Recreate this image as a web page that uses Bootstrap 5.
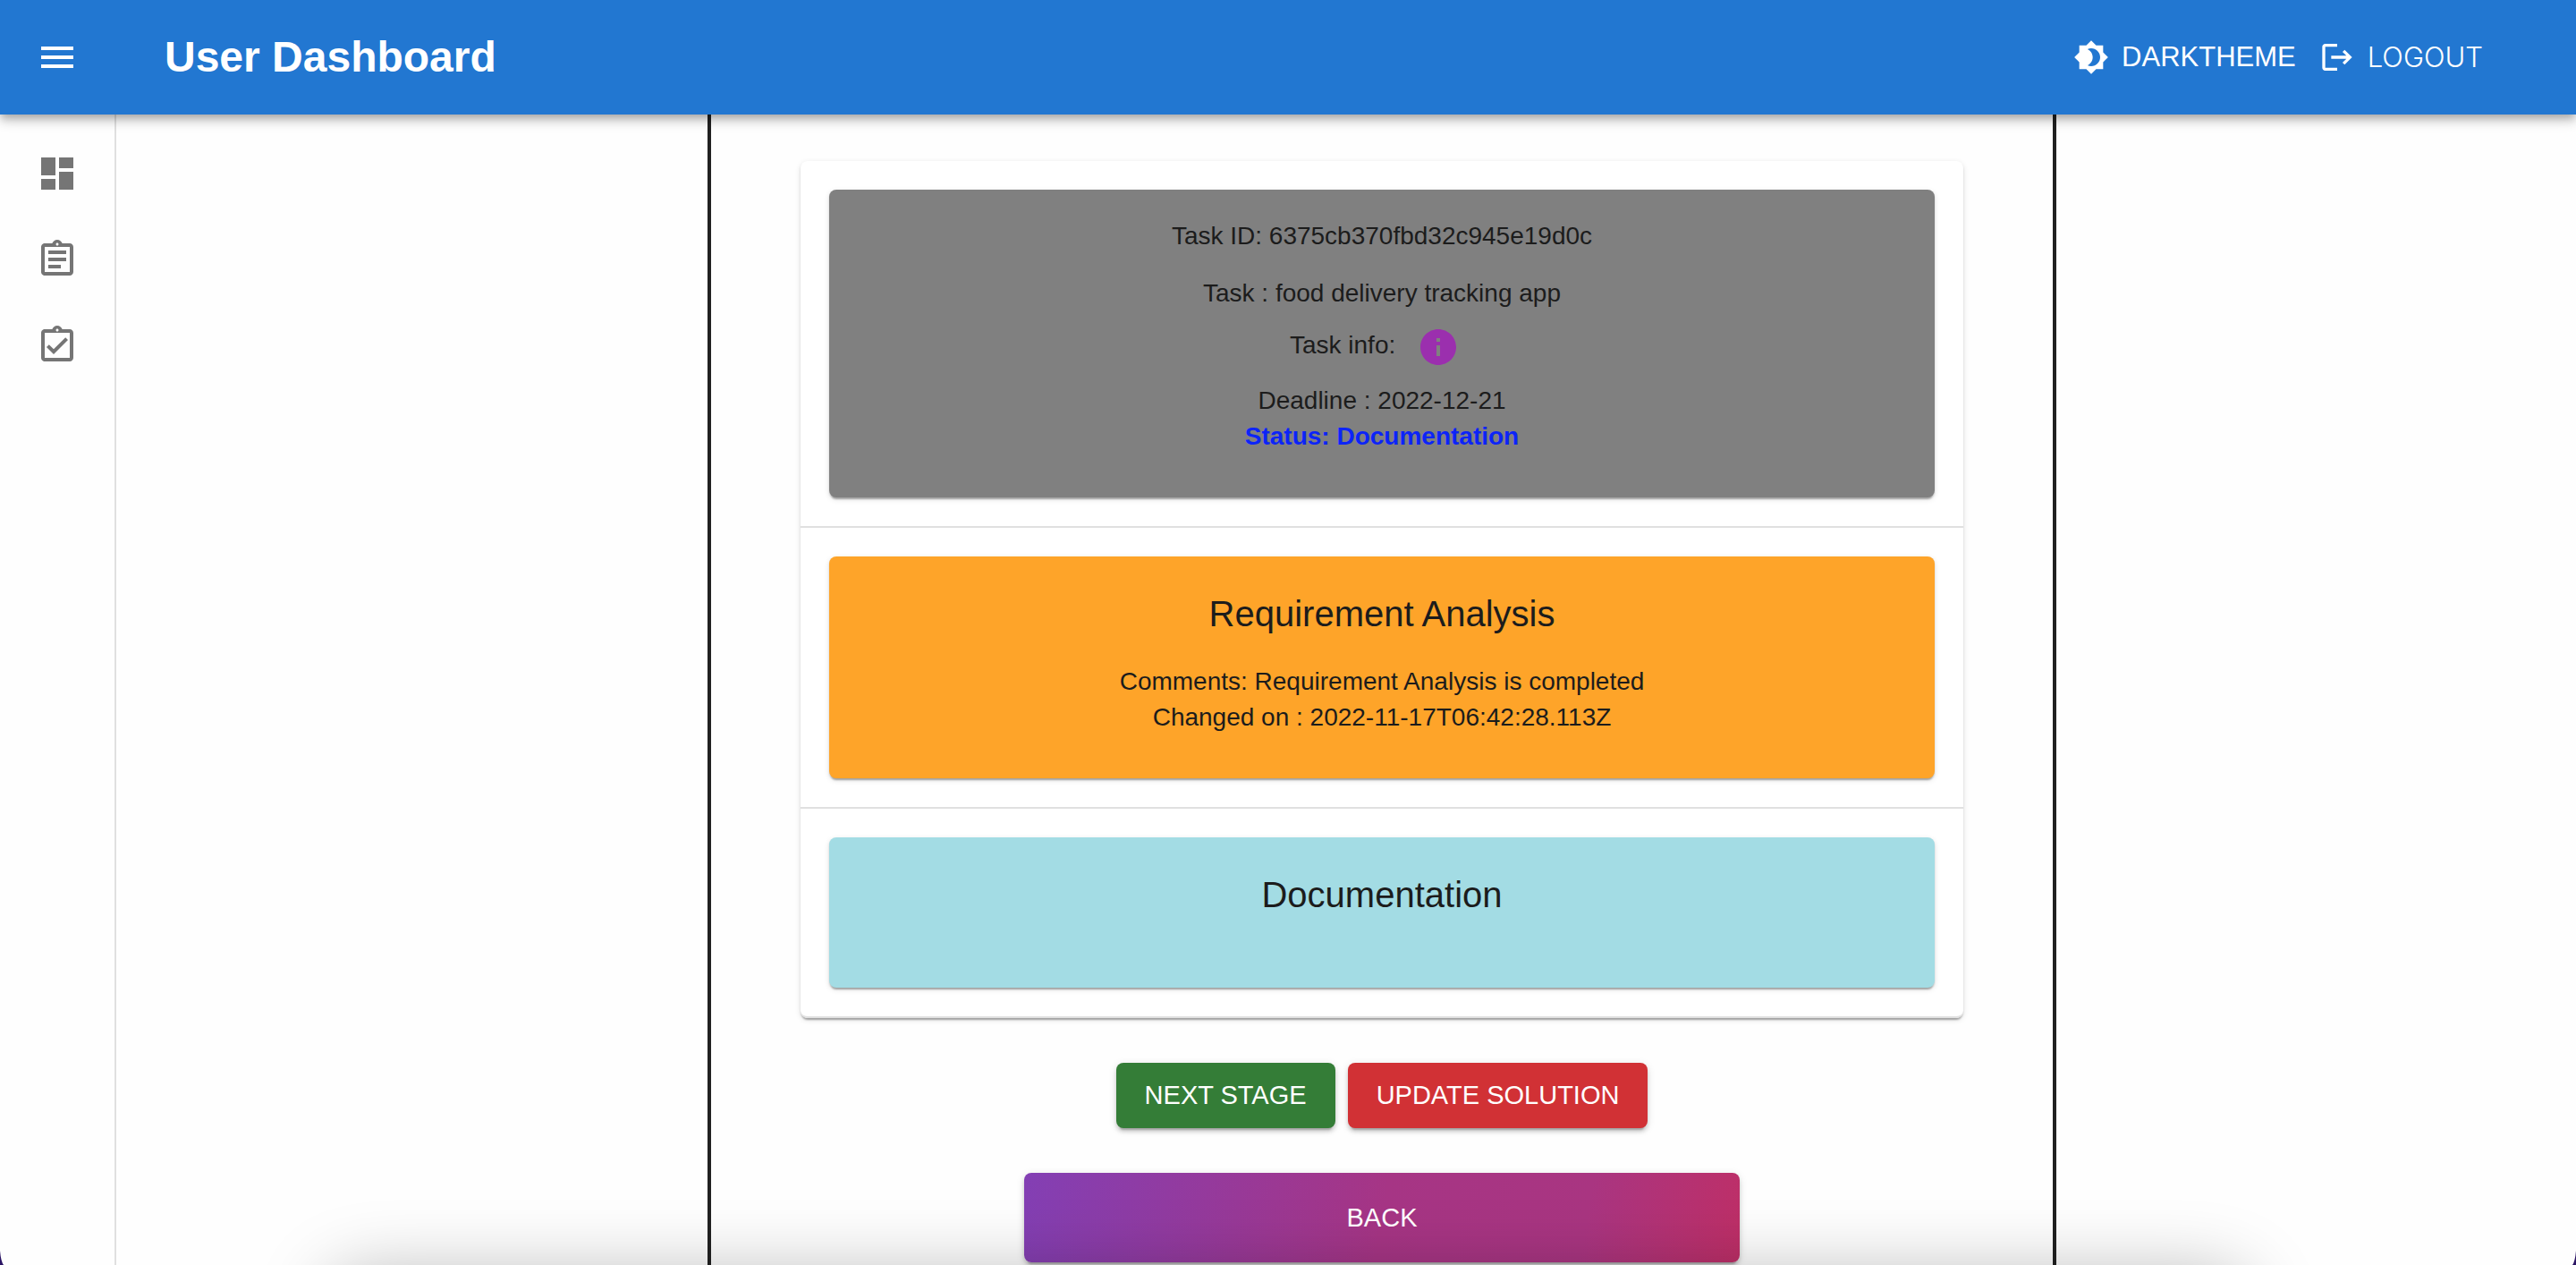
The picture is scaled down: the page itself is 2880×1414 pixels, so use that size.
<!DOCTYPE html>
<html lang="en">
<head>
<meta charset="utf-8">
<meta name="viewport" content="width=device-width, initial-scale=1">
<title>User Dashboard</title>
<link href="https://cdn.jsdelivr.net/npm/bootstrap@5.3.0/dist/css/bootstrap.min.css" rel="stylesheet">
<style>
  body { font-family: "Liberation Sans", Arial, sans-serif; font-size: 28px; line-height: 40px; color: #1c1c1c; background: #fefefe; }
  .app-bar { height: 128px; padding: 0 104px 0 40px; background: #2277d1; color: #fff; box-shadow: 0 4px 8px -2px rgba(0,0,0,.2), 0 8px 10px rgba(0,0,0,.14), 0 2px 20px rgba(0,0,0,.12); }
  .app-title { font-size: 48px; line-height: 64px; font-weight: 700; margin-left: 96px; }
  .app-actions { gap: 26px; }
  .app-action { font-size: 31px; line-height: 48px; gap: 14px; color: #fff; }
  .app-action-light { font-family: Inter, "Liberation Sans", sans-serif; font-weight: 300; }
  .rail { width: 130px; border-right: 2px solid #e0e0e0; padding: 42px 0; gap: 48px; background: #fefefe; }
  .rail a { color: #757575; line-height: 0; }
  .icon-48 { width: 48px; height: 48px; fill: currentColor; }
  .icon-40 { width: 40px; height: 40px; fill: currentColor; }
  .content-area { padding-left: 80px; }
  .stage-frame { width: 1508px; max-width: 100%; border: solid #212121; border-width: 0 4px; padding: 52px 100px 0; }
  .stage-list { border-radius: 8px; background: #fff; box-shadow: 0 4px 2px -2px rgba(0,0,0,.2), 0 2px 2px rgba(0,0,0,.14), 0 2px 6px rgba(0,0,0,.12); }
  .stage-item { padding: 32px; border-bottom: 2px solid #e0e0e0; }
  .stage-item:last-child { border-radius: 0 0 8px 8px; }
  .stage-card { border-radius: 8px; padding: 32px 32px 48px; text-align: center; box-shadow: 0 4px 2px -2px rgba(0,0,0,.2), 0 2px 2px rgba(0,0,0,.14), 0 2px 6px rgba(0,0,0,.12); }
  .stage-card p { margin: 0; }
  .stage-card .spaced { margin-bottom: 24px; }
  .stage-card h2 { font-size: 40px; line-height: 64px; font-weight: 400; margin: 0 0 24px; }
  .tone-task { background: #808080; }
  .tone-done { background: #fea429; }
  .tone-current { background: #a3dce4; }
  .status-text { color: #0c24f8; font-weight: 700; }
  .info-btn { padding: 16px; border: 0; color: #9b2fae; line-height: 0; vertical-align: middle; }
  .actions { padding-top: 50px; gap: 50px; }
  .button-row { gap: 14px; }
  .action-btn { font-size: 29px; line-height: 49px; padding: 12px 32px; border: 0; border-radius: 8px; color: #fff; box-shadow: 0 6px 2px -4px rgba(0,0,0,.2), 0 4px 4px rgba(0,0,0,.14), 0 2px 10px rgba(0,0,0,.12); }
  .btn-next { background: #347d37; }
  .btn-update { background: #d13135; }
  .btn-back { width: 800px; max-width: 100%; height: 100px; background: linear-gradient(100deg, #833fb4 0%, #a63585 50%, #a93581 78%, #be2f67 100%); }
  .dock-shade { left: 12%; right: 12%; top: 100%; height: 200px; pointer-events: none; z-index: 2000; }
  .dock-shade::before { content: ""; position: absolute; inset: 10px 20px 0; border-radius: 40px; box-shadow: 0 0 80px rgba(0,0,0,.28); }
  .corner { width: 4px; height: 16px; bottom: 0; z-index: 2100; }
</style>
<script src="https://cdn.jsdelivr.net/npm/bootstrap@5.3.0/dist/js/bootstrap.bundle.min.js"></script>
</head>
<body>
<div class="d-flex flex-column min-vh-100">
  <header class="app-bar sticky-top d-flex align-items-center">
    <button type="button" class="btn p-0 border-0 text-white lh-1" aria-label="Toggle menu">
      <svg class="icon-48 d-block" viewBox="0 0 24 24"><path d="M3 18h18v-2H3v2zm0-5h18v-2H3v2zm0-7v2h18V6H3z"/></svg>
    </button>
    <h1 class="app-title mb-0">User Dashboard</h1>
    <div class="app-actions ms-auto d-flex align-items-center">
      <button type="button" class="app-action btn p-0 border-0 d-flex align-items-center">
        <svg class="icon-40" viewBox="0 0 24 24"><path d="M20 8.69V4h-4.69L12 .69 8.69 4H4v4.69L.69 12 4 15.31V20h4.69L12 23.31 15.31 20H20v-4.690L23.31 12 20 8.69zM12 18c-.89 0-1.740-.2-2.500-.55C11.560 16.500 13 14.420 13 12s-1.440-4.500-3.500-5.450C10.260 6.200 11.110 6 12 6c3.310 0 6 2.690 6 6s-2.690 6-6 6z"/></svg>
        DARKTHEME
      </button>
      <a href="#" class="app-action app-action-light text-decoration-none d-flex align-items-center">
        <svg class="icon-40" viewBox="0 0 24 24"><path d="M17 7l-1.410 1.410L18.170 11H8v2h10.170l-2.580 2.580L17 17l5-5zM4 5h8V3H4c-1.100 0-2 .9-2 2v14c0 1.100.9 2 2 2h8v-2H4V5z"/></svg>
        LOGOUT
      </a>
    </div>
  </header>

  <div class="d-flex flex-grow-1">
    <nav class="rail d-flex flex-column align-items-center flex-shrink-0" aria-label="Main">
      <a href="#" aria-label="Dashboard"><svg class="icon-48" viewBox="0 0 24 24"><path d="M3 13h8V3H3v10zm0 8h8v-6H3v6zm10 0h8V11h-8v10zm0-18v6h8V3h-8z"/></svg></a>
      <a href="#" aria-label="Tasks"><svg class="icon-48" viewBox="0 0 24 24"><path d="M7 15h7v2H7zm0-4h10v2H7zm0-4h10v2H7zm12-4h-4.180C14.400 1.840 13.300 1 12 1c-1.300 0-2.400.84-2.820 2H5c-.14 0-.27.010-.4.040-.39.080-.74.280-1.010.55-.18.180-.33.400-.43.640-.1.230-.16.490-.16.770v14c0 .27.060.54.160.78s.25.450.43.640c.27.270.62.470 1.010.55.130.020.26.030.4.030h14c1.100 0 2-.9 2-2V5c0-1.100-.9-2-2-2zm-7-.25c.41 0 .75.340.75.750s-.34.750-.75.750-.75-.34-.75-.75.34-.75.75-.75zM19 19H5V5h14v14z"/></svg></a>
      <a href="#" aria-label="Completed"><svg class="icon-48" viewBox="0 0 24 24"><path d="M18 9l-1.410-1.420L10 14.170l-2.590-2.580L6 13l4 4zm1-6h-4.180C14.400 1.840 13.300 1 12 1c-1.300 0-2.400.84-2.820 2H5c-.14 0-.27.010-.4.040-.39.080-.74.280-1.010.55-.18.180-.33.400-.43.640-.1.230-.16.490-.16.770v14c0 .27.060.54.160.78s.25.450.43.640c.27.270.62.470 1.010.55.130.020.26.030.4.030h14c1.100 0 2-.9 2-2V5c0-1.100-.9-2-2-2zm-7-.25c.41 0 .75.340.75.750s-.34.750-.75.750-.75-.34-.75-.75.34-.75.75-.75zM19 19H5V5h14v14z"/></svg></a>
    </nav>

    <main class="content-area flex-grow-1 d-flex justify-content-center">
      <div class="stage-frame">
        <div class="stage-list">
          <section class="stage-item">
            <div class="stage-card tone-task">
              <p class="spaced">Task ID: 6375cb370fbd32c945e19d0c</p>
              <p>Task : food delivery tracking app</p>
              <p>Task info: <button type="button" class="btn info-btn" aria-label="Show task info"><svg class="icon-48" viewBox="0 0 24 24"><path d="M12 2C6.480 2 2 6.480 2 12s4.480 10 10 10 10-4.480 10-10S17.520 2 12 2zm1 15h-2v-6h2v6zm0-8h-2V7h2v2z"/></svg></button></p>
              <p>Deadline : 2022-12-21</p>
              <p class="status-text">Status: Documentation</p>
            </div>
          </section>
          <section class="stage-item">
            <div class="stage-card tone-done">
              <h2>Requirement Analysis</h2>
              <p>Comments: Requirement Analysis is completed</p>
              <p>Changed on : 2022-11-17T06:42:28.113Z</p>
            </div>
          </section>
          <section class="stage-item">
            <div class="stage-card tone-current">
              <h2>Documentation</h2>
            </div>
          </section>
        </div>
        <div class="actions d-flex flex-column align-items-center">
          <div class="button-row d-flex">
            <button type="button" class="btn action-btn btn-next">NEXT STAGE</button>
            <button type="button" class="btn action-btn btn-update">UPDATE SOLUTION</button>
          </div>
          <button type="button" class="btn action-btn btn-back">BACK</button>
        </div>
      </div>
    </main>
  </div>
</div>
<div class="dock-shade position-fixed"></div>
<svg class="corner position-fixed start-0" viewBox="0 0 4 16"><path d="M0 0Q1 12 4 16H0z" fill="#2b1464"/></svg>
<svg class="corner position-fixed end-0" viewBox="0 0 4 16"><path d="M4 0Q3 12 0 16H4z" fill="#2b1464"/></svg>
</body>
</html>
